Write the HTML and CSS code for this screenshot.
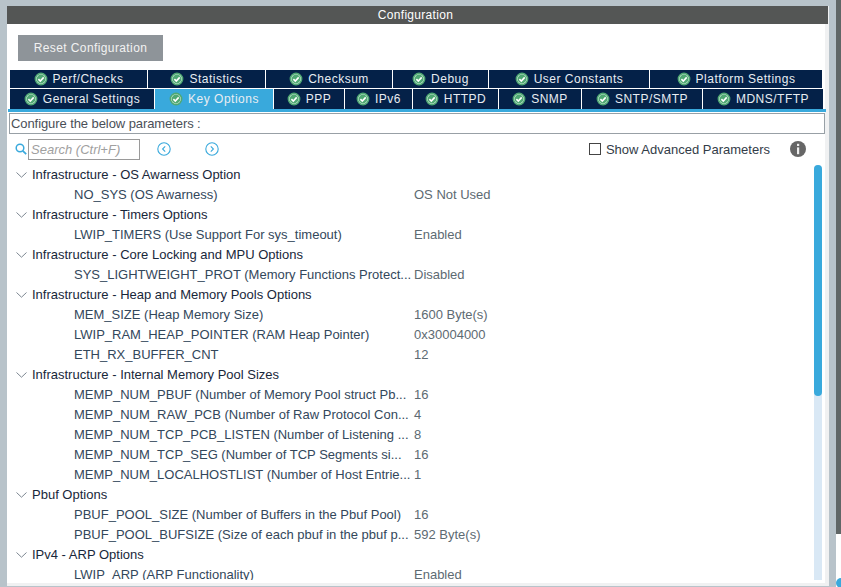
FILE: index.html
```html
<!doctype html>
<html lang="en">
  <head>
    <meta charset="UTF-8" />
    <title>Configuration</title>
    <link rel="stylesheet" href="styles.css">
  </head>
  <body>
    <svg class="defs" width="0" height="0">
      <symbol id="ok" viewBox="0 0 14 14">
        <circle cx="7" cy="7" r="5.6" fill="#e4f2ea" stroke="#4fa873" stroke-width="1.6" />
        <circle cx="7" cy="7" r="4.4" fill="#4fa873" />
        <path d="M4.4 7.1 6.3 9 9.7 5.4" fill="none" stroke="#fff" stroke-width="1.6" />
      </symbol>
    </svg>

    <main class="panel">
      <header class="title-bar">Configuration</header>

      <div class="reset-row">
        <button class="reset-btn">Reset Configuration</button>
      </div>

      <div class="tabs">
        <div class="tab-row row-top">
          <div class="tab"><svg class="ok"><use href="#ok" /></svg>Perf/Checks</div>
          <div class="tab"><svg class="ok"><use href="#ok" /></svg>Statistics</div>
          <div class="tab"><svg class="ok"><use href="#ok" /></svg>Checksum</div>
          <div class="tab"><svg class="ok"><use href="#ok" /></svg>Debug</div>
          <div class="tab"><svg class="ok"><use href="#ok" /></svg>User Constants</div>
          <div class="tab"><svg class="ok"><use href="#ok" /></svg>Platform Settings</div>
        </div>
        <div class="tab-row row-bottom">
          <div class="tab"><svg class="ok"><use href="#ok" /></svg>General Settings</div>
          <div class="tab active"><svg class="ok"><use href="#ok" /></svg>Key Options</div>
          <div class="tab"><svg class="ok"><use href="#ok" /></svg>PPP</div>
          <div class="tab"><svg class="ok"><use href="#ok" /></svg>IPv6</div>
          <div class="tab"><svg class="ok"><use href="#ok" /></svg>HTTPD</div>
          <div class="tab"><svg class="ok"><use href="#ok" /></svg>SNMP</div>
          <div class="tab"><svg class="ok"><use href="#ok" /></svg>SNTP/SMTP</div>
          <div class="tab"><svg class="ok"><use href="#ok" /></svg>MDNS/TFTP</div>
        </div>
      </div>

      <div class="hint">Configure the below parameters :</div>

      <div class="toolbar">
        <svg class="search-icon" viewBox="0 0 12 12">
          <circle cx="5" cy="5" r="3.8" fill="none" stroke="#39a9dc" stroke-width="1.5" />
          <path d="M7.8 7.8 11.2 11.2" stroke="#39a9dc" stroke-width="1.7" />
        </svg>
        <div class="search-box">Search (Ctrl+F)</div>
        <svg class="nav-icon nav-prev" viewBox="0 0 14 14">
          <circle cx="7" cy="7" r="6.2" fill="none" stroke="#39a9dc" stroke-width="1.1" />
          <path d="M8.2 4.4 5.6 7 8.2 9.6" fill="none" stroke="#39a9dc" stroke-width="1.1" />
        </svg>
        <svg class="nav-icon nav-next" viewBox="0 0 14 14">
          <circle cx="7" cy="7" r="6.2" fill="none" stroke="#39a9dc" stroke-width="1.1" />
          <path d="M5.8 4.4 8.4 7 5.8 9.6" fill="none" stroke="#39a9dc" stroke-width="1.1" />
        </svg>
        <span class="advanced"><span class="checkbox"></span>Show Advanced Parameters</span>
        <svg class="info-icon" viewBox="0 0 16 16">
          <circle cx="8" cy="8" r="8" fill="#666" />
          <rect x="7" y="2.8" width="2.2" height="2.2" fill="#eee" />
          <rect x="7" y="6.4" width="2.2" height="6.8" fill="#eee" />
        </svg>
      </div>

      <div class="tree-wrap">
        <div class="tree">
          <div class="group"><svg class="chevron" viewBox="0 0 11 6"><path d="M.5.5 5.5 5.2 10.5.5" /></svg>Infrastructure - OS Awarness Option</div>
          <div class="param"><span class="name">NO_SYS (OS Awarness)</span><span class="value">OS Not Used</span></div>
          <div class="group"><svg class="chevron" viewBox="0 0 11 6"><path d="M.5.5 5.5 5.2 10.5.5" /></svg>Infrastructure - Timers Options</div>
          <div class="param"><span class="name">LWIP_TIMERS (Use Support For sys_timeout)</span><span class="value">Enabled</span></div>
          <div class="group"><svg class="chevron" viewBox="0 0 11 6"><path d="M.5.5 5.5 5.2 10.5.5" /></svg>Infrastructure - Core Locking and MPU Options</div>
          <div class="param"><span class="name">SYS_LIGHTWEIGHT_PROT (Memory Functions Protect...</span><span class="value">Disabled</span></div>
          <div class="group"><svg class="chevron" viewBox="0 0 11 6"><path d="M.5.5 5.5 5.2 10.5.5" /></svg>Infrastructure - Heap and Memory Pools Options</div>
          <div class="param"><span class="name">MEM_SIZE (Heap Memory Size)</span><span class="value">1600 Byte(s)</span></div>
          <div class="param"><span class="name">LWIP_RAM_HEAP_POINTER (RAM Heap Pointer)</span><span class="value">0x30004000</span></div>
          <div class="param"><span class="name">ETH_RX_BUFFER_CNT</span><span class="value">12</span></div>
          <div class="group"><svg class="chevron" viewBox="0 0 11 6"><path d="M.5.5 5.5 5.2 10.5.5" /></svg>Infrastructure - Internal Memory Pool Sizes</div>
          <div class="param"><span class="name">MEMP_NUM_PBUF (Number of Memory Pool struct Pb...</span><span class="value">16</span></div>
          <div class="param"><span class="name">MEMP_NUM_RAW_PCB (Number of Raw Protocol Con...</span><span class="value">4</span></div>
          <div class="param"><span class="name">MEMP_NUM_TCP_PCB_LISTEN (Number of Listening ...</span><span class="value">8</span></div>
          <div class="param"><span class="name">MEMP_NUM_TCP_SEG (Number of TCP Segments si...</span><span class="value">16</span></div>
          <div class="param"><span class="name">MEMP_NUM_LOCALHOSTLIST (Number of Host Entrie...</span><span class="value">1</span></div>
          <div class="group"><svg class="chevron" viewBox="0 0 11 6"><path d="M.5.5 5.5 5.2 10.5.5" /></svg>Pbuf Options</div>
          <div class="param"><span class="name">PBUF_POOL_SIZE (Number of Buffers in the Pbuf Pool)</span><span class="value">16</span></div>
          <div class="param"><span class="name">PBUF_POOL_BUFSIZE (Size of each pbuf in the pbuf p...</span><span class="value">592 Byte(s)</span></div>
          <div class="group"><svg class="chevron" viewBox="0 0 11 6"><path d="M.5.5 5.5 5.2 10.5.5" /></svg>IPv4 - ARP Options</div>
          <div class="param"><span class="name">LWIP_ARP (ARP Functionality)</span><span class="value">Enabled</span></div>
        </div>
        <div class="scrollbar"><div class="thumb"></div></div>
      </div>
    </main>

    <div class="edge"><div class="edge-dark"></div><div class="edge-dot"></div></div>
  </body>
</html>
```

FILE: styles.css
```css
/* Page frame */
html, body {
  margin: 0;
  height: 100%;
}

body {
  display: flex;
  height: 587px;
  overflow: hidden;
  background: #b8c3ca;
  font-family: "Liberation Sans", Arial, sans-serif;
  font-size: 13px;
}

.defs {
  position: absolute;
}

.panel {
  box-sizing: border-box;
  width: 822px;
  height: 580px;
  margin: 6px 7px 0 7px;
  background: #fff;
  border-right: 4px solid #f0f1f2;
  border-bottom: 3px solid #f0f1f2;
  display: flex;
  flex-direction: column;
}

.title-bar {
  box-sizing: border-box;
  height: 18px;
  line-height: 18px;
  margin-right: -3px;
  padding-right: 4px;
  background: #545655;
  color: #fff;
  font-size: 12px;
  letter-spacing: 0.3px;
  text-align: center;
  flex: none;
}

/* Reset button */
.reset-row {
  height: 46px;
  padding: 11px 0 0 11px;
  box-sizing: border-box;
  flex: none;
}

.reset-btn {
  display: block;
  width: 145px;
  height: 26px;
  padding: 0;
  border: 0;
  background: #8e9499;
  color: #f2f2f2;
  font: inherit;
  font-size: 12px;
  letter-spacing: 0.4px;
}

/* Tabs */
.tabs {
  margin-left: 1px;
  margin-right: -1px;
  border-bottom: 3px solid #39a9dc;
  flex: none;
}

.tab-row {
  display: grid;
  margin-left: 2px;
  margin-right: 3px;
  column-gap: 1px;
}

.row-top {
  height: 18px;
  margin-bottom: 1px;
  grid-template-columns: 137px 117px 126px 95px 160px 172px;
}

.row-bottom {
  height: 20px;
  grid-template-columns: 144px 118px 70px 67px 85px 82px 120px 120px;
}

.tab {
  display: flex;
  align-items: center;
  justify-content: center;
  gap: 5px;
  background: #042148;
  color: #e8edf2;
  font-size: 12px;
  letter-spacing: 0.5px;
  white-space: nowrap;
}

.tab.active {
  background: #39a9dc;
}

.ok {
  width: 14px;
  height: 14px;
  flex: none;
}

/* Hint line */
.hint {
  box-sizing: border-box;
  height: 21px;
  line-height: 19px;
  margin: 1px 0 0 2px;
  padding-left: 1px;
  border: 1px solid #98a0a6;
  color: #4a4f57;
  letter-spacing: -0.08px;
  flex: none;
}

/* Search toolbar */
.toolbar {
  box-sizing: border-box;
  height: 31px;
  padding-bottom: 1px;
  display: flex;
  align-items: center;
  color: #333c48;
  flex: none;
}

.search-icon {
  width: 12px;
  height: 12px;
  margin-left: 8px;
}

.search-box {
  box-sizing: border-box;
  width: 112px;
  height: 21px;
  line-height: 19px;
  margin-left: 1px;
  padding-left: 2px;
  border: 1px solid #9a9a9a;
  color: #a0a0a0;
  font-style: italic;
}

.nav-icon {
  width: 14px;
  height: 14px;
}

.nav-prev {
  margin-left: 17px;
}

.nav-next {
  margin-left: 34px;
}

.advanced {
  display: flex;
  align-items: center;
  margin-left: auto;
  margin-right: 20px;
}

.checkbox {
  box-sizing: border-box;
  width: 12px;
  height: 12px;
  margin-right: 5px;
  border: 1px solid #444;
}

.info-icon {
  width: 16px;
  height: 16px;
  margin-right: 19px;
}

/* Parameter tree */
.tree-wrap {
  flex: 1;
  display: flex;
  min-height: 0;
  margin-bottom: 3px;
  overflow: hidden;
}

.tree {
  flex: 1;
  overflow: hidden;
}

.group, .param {
  height: 20px;
  line-height: 20px;
  white-space: nowrap;
}

.group {
  display: flex;
  align-items: center;
  color: #18273a;
}

.chevron {
  width: 11px;
  height: 6px;
  margin: 0 5px 0 9px;
  fill: none;
  stroke: #7d8791;
}

.param {
  display: flex;
  padding-left: 67px;
  color: #33475b;
}

.name {
  width: 340px;
  flex: none;
}

.value {
  color: #5d6a72;
}

.scrollbar {
  width: 8px;
  margin: 0 3px 0 0;
  background: #d9e8f5;
  border-radius: 4px 4px 0 0;
}

.thumb {
  height: 231px;
  background: #39a9dc;
  border-radius: 4px;
}

/* Strip of the next window along the right edge */
.edge {
  position: relative;
  width: 5px;
  flex: none;
  background: #fff;
}

.edge-dark {
  height: 534px;
  background: #606666;
}

.edge-dot {
  position: absolute;
  left: 0;
  top: 578px;
  width: 10px;
  height: 10px;
  border-radius: 50%;
  background: #39a9dc;
}
```
